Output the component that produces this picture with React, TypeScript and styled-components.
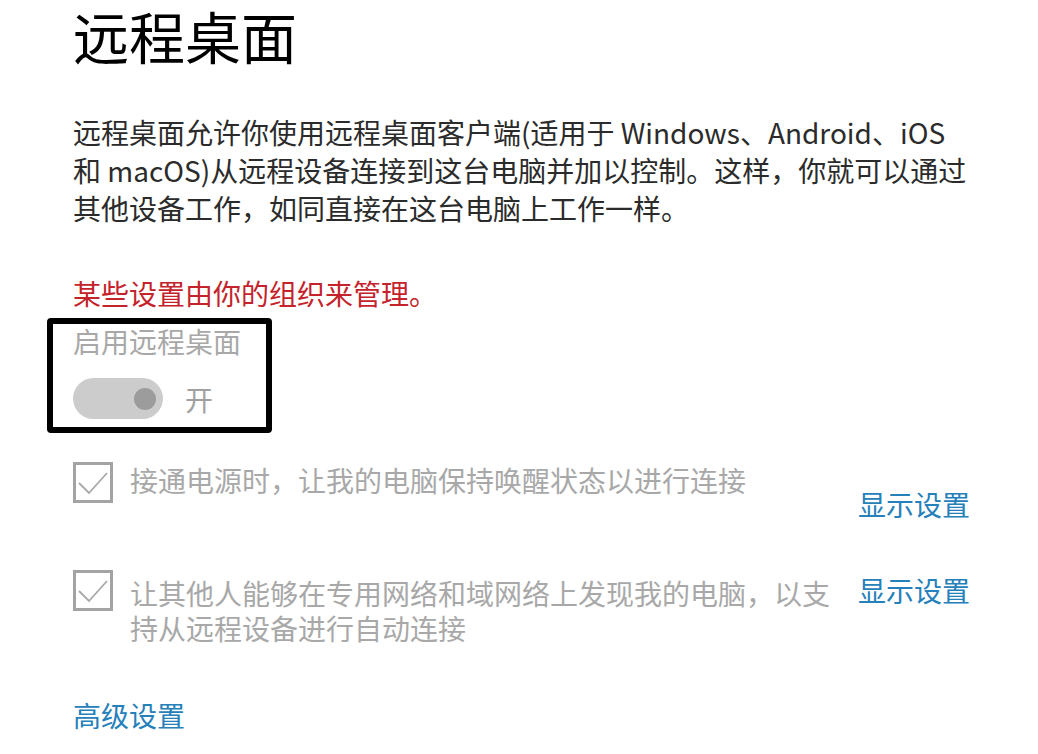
import React from "react";
import styled, { createGlobalStyle } from "styled-components";

const Global = createGlobalStyle`
  html, body { margin: 0; padding: 0; background: #ffffff; }
  body { font-family: "Noto Sans CJK SC", "Noto Sans", sans-serif; }
`;

const Page = styled.div`
  width: 1038px;
  height: 754px;
  overflow: hidden;
  box-sizing: border-box;
  padding: 0 0 0 73px;
  display: flex;
  flex-direction: column;
  align-items: flex-start;
`;

const Title = styled.h1`
  margin: 0;
  font-size: 56px;
  line-height: 70px;
  font-weight: 400;
  color: #000;
`;

const Paragraph = styled.p`
  margin: 43px 0 0;
  font-size: 28px;
  line-height: 38px;
  color: #2b2b2b;
  white-space: nowrap;
`;

const Managed = styled.div`
  margin-top: 47px;
  font-size: 28px;
  line-height: 38px;
  color: #c4232b;
`;

const FocusBox = styled.div`
  margin: 6px 0 0 -26px;
  width: 225px;
  box-sizing: border-box;
  border: 6px solid #000;
  border-radius: 4px;
  padding: 0 0 8px 20px;
  display: flex;
  flex-direction: column;
  gap: 20px;
`;

const DisabledLabel = styled.div`
  font-size: 28px;
  line-height: 34px;
  color: #a8a8a8;
`;

const ToggleRow = styled.div`
  display: flex;
  align-items: center;
  gap: 22px;
`;

const Track = styled.div`
  width: 90px;
  height: 41px;
  border-radius: 21px;
  background: #cccccc;
  display: flex;
  align-items: center;
  justify-content: flex-end;
  padding-right: 7px;
  box-sizing: border-box;
`;

const Knob = styled.div`
  width: 22px;
  height: 22px;
  border-radius: 50%;
  background: #9c9c9c;
`;

const ToggleText = styled.span`
  font-size: 28px;
  line-height: 34px;
  color: #a0a0a0;
`;

const Options = styled.div`
  margin-top: 30px;
  display: flex;
  flex-direction: column;
  gap: 49px;
`;

const OptionRow = styled.div`
  display: grid;
  grid-template-columns: 40px 711px 112px;
  column-gap: 17px;
  align-items: start;
`;

const Box = styled.div`
  width: 40px;
  height: 41px;
  box-sizing: border-box;
  border: 3px solid #a3a3a3;
  display: flex;
  align-items: center;
  justify-content: center;
  margin-top: -1px;
`;

const OptionText = styled.div<{ $offset: number }>`
  font-size: 28px;
  line-height: 35px;
  color: #a8a8a8;
  white-space: nowrap;
  margin-top: ${(p) => p.$offset}px;
`;

const Link = styled.a<{ $offset: number }>`
  font-size: 28px;
  line-height: 35px;
  color: #2680ba;
  text-decoration: none;
  white-space: nowrap;
  margin-top: ${(p) => p.$offset}px;
  justify-self: end;
`;

const Advanced = styled.a`
  margin-top: 50px;
  font-size: 28px;
  line-height: 38px;
  color: #2680ba;
  text-decoration: none;
`;

const Check = () => (
  <svg width="32" height="26" viewBox="0 0 32 26">
    <path d="M2 13 L12 23 L30 3" fill="none" stroke="#a8a8a8" strokeWidth="1.8" />
  </svg>
);

export default function App() {
  return (
    <Page>
      <Global />
      <Title>远程桌面</Title>
      <Paragraph>
        远程桌面允许你使用远程桌面客户端(适用于 Windows、Android、iOS
        <br />
        和 macOS)从远程设备连接到这台电脑并加以控制。这样，你就可以通过
        <br />
        其他设备工作，如同直接在这台电脑上工作一样。
      </Paragraph>
      <Managed>某些设置由你的组织来管理。</Managed>
      <FocusBox>
        <DisabledLabel>启用远程桌面</DisabledLabel>
        <ToggleRow>
          <Track>
            <Knob />
          </Track>
          <ToggleText>开</ToggleText>
        </ToggleRow>
      </FocusBox>
      <Options>
        <OptionRow>
          <Box>
            <Check />
          </Box>
          <OptionText $offset={0}>接通电源时，让我的电脑保持唤醒状态以进行连接</OptionText>
          <Link href="#" $offset={24}>显示设置</Link>
        </OptionRow>
        <OptionRow>
          <Box>
            <Check />
          </Box>
          <OptionText $offset={5}>
            让其他人能够在专用网络和域网络上发现我的电脑，以支
            <br />
            持从远程设备进行自动连接
          </OptionText>
          <Link href="#" $offset={2}>显示设置</Link>
        </OptionRow>
      </Options>
      <Advanced href="#">高级设置</Advanced>
    </Page>
  );
}
